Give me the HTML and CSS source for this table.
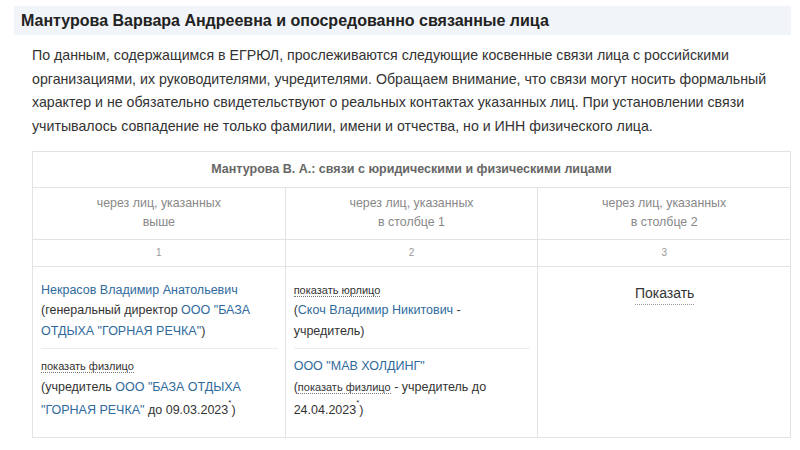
FILE: index.html
```html
<!DOCTYPE html>
<html lang="ru">
<head>
  <meta charset="UTF-8" />
  <title>Мантурова В. А.</title>
  <link rel="stylesheet" href="styles.css">
</head>
<body>
  <div class="page">
    <h2 class="titul">Мантурова Варвара Андреевна и опосредованно связанные лица</h2>

    <p class="opisanie">По данным, содержащимся в ЕГРЮЛ, прослеживаются следующие косвенные связи лица с российскими организациями, их руководителями, учредителями. Обращаем внимание, что связи могут носить формальный характер и не обязательно свидетельствуют о реальных контактах указанных лиц. При установлении связи учитывалось совпадение не только фамилии, имени и отчества, но и ИНН физического лица.</p>

    <table class="svyazi">
      <tr>
        <th colspan="3" class="zag">Мантурова В. А.: связи с юридическими и физическими лицами</th>
      </tr>
      <tr class="stolbcy">
        <td>через лиц, указанных<br>выше</td>
        <td>через лиц, указанных<br>в столбце 1</td>
        <td>через лиц, указанных<br>в столбце 2</td>
      </tr>
      <tr class="nomera">
        <td>1</td>
        <td>2</td>
        <td>3</td>
      </tr>
      <tr class="dannye">
        <td>
          <div class="zapis">
            <a href="#">Некрасов Владимир Анатольевич</a><br>
            (генеральный директор <a href="#">ООО "БАЗА ОТДЫХА "ГОРНАЯ РЕЧКА"</a>)
          </div>
          <div class="zapis">
            <span class="pokazat">показать физлицо</span><br>
            (учредитель <a href="#">ООО "БАЗА ОТДЫХА "ГОРНАЯ РЕЧКА"</a> до 09.03.2023<sup>*</sup>)
          </div>
        </td>
        <td>
          <div class="zapis">
            <span class="pokazat">показать юрлицо</span><br>
            (<a href="#">Скоч Владимир Никитович</a> - учредитель)
          </div>
          <div class="zapis">
            <a href="#">ООО "МАВ ХОЛДИНГ"</a><br>
            (<span class="pokazat">показать физлицо</span> - учредитель до 24.04.2023<sup>*</sup>)
          </div>
        </td>
        <td class="knopka">
          <span class="pokazat-vse">Показать</span>
        </td>
      </tr>
    </table>
  </div>
</body>
</html>
```

FILE: styles.css
```css
body {
  margin: 0;
  background: #ffffff;
  font-family: "Liberation Sans", Arial, sans-serif;
  color: #333;
}

.page {
  padding: 6px 9px 0 14px;
}

.titul {
  margin: 0;
  background: #f1f4f8;
  font-size: 16px;
  font-weight: bold;
  color: #222;
  padding: 6px 7px 5px;
  line-height: 18px;
}

.opisanie {
  margin: 9px 0 0 18px;
  font-size: 14.2px;
  line-height: 23.7px;
  color: #333;
}

.svyazi {
  margin: 12px 0 0 18px;
  width: calc(100% - 18px);
  border-collapse: collapse;
  table-layout: fixed;
}

.svyazi td, .svyazi th {
  border: 1px solid #e3e3e3;
}

.zag {
  height: 33px;
  font-size: 12.5px;
  color: #666;
  font-weight: bold;
  text-align: center;
}

.stolbcy td {
  height: 49px;
  text-align: center;
  font-size: 12.4px;
  line-height: 19.5px;
  color: #888;
}

.nomera td {
  height: 24px;
  text-align: center;
  font-size: 10px;
  color: #999;
}

.dannye td {
  vertical-align: top;
  padding: 13px 7px 16px 8px;
  font-size: 12.5px;
  line-height: 20.5px;
  color: #333;
}

.zapis + .zapis {
  border-top: 1px solid #ececec;
  margin-top: 7px;
  padding-top: 7px;
}

.zapis a {
  color: #2f6a9d;
  text-decoration: none;
}

.pokazat {
  font-size: 11px;
  color: #333;
  border-bottom: 1px dotted #777;
}

sup {
  font-size: 8px;
  line-height: 12px;
  vertical-align: 9px;
}

.knopka {
  text-align: center;
}

.pokazat-vse {
  display: inline-block;
  margin-top: 4px;
  font-size: 14px;
  line-height: 18px;
  color: #333;
  border-bottom: 1px dotted #999;
  padding-bottom: 2px;
}
```
